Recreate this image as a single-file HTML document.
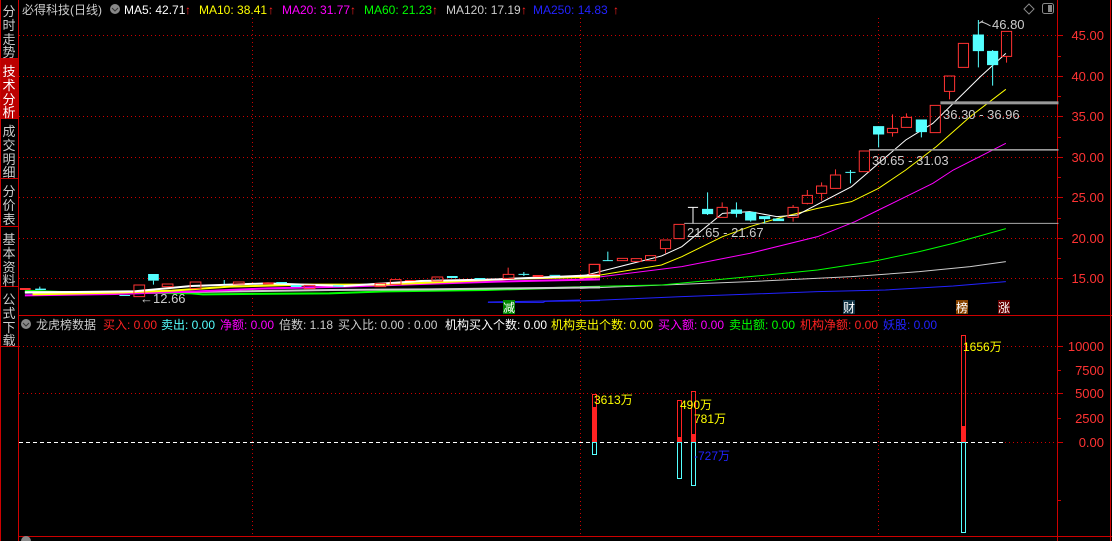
<!DOCTYPE html>
<html><head><meta charset="utf-8"><style>
html,body{margin:0;padding:0;background:#000;width:1112px;height:541px;overflow:hidden}
svg{display:block}
text{font-family:"Liberation Sans","Noto Sans CJK SC",sans-serif;font-size:12px}
</style></head><body>
<svg width="1112" height="541" viewBox="0 0 1112 541" xmlns="http://www.w3.org/2000/svg">
<rect width="1112" height="541" fill="#000"/>
<!-- sidebar -->
<g stroke="#c00" fill="none">
<line x1="18.5" y1="0" x2="18.5" y2="541"/>
<line x1="0.5" y1="0" x2="0.5" y2="541"/>
<line x1="0" y1="58.5" x2="18" y2="58.5"/>
<line x1="0" y1="118.5" x2="18" y2="118.5"/>
<line x1="0" y1="178.5" x2="18" y2="178.5"/>
<line x1="0" y1="226.5" x2="18" y2="226.5"/>
<line x1="0" y1="286.5" x2="18" y2="286.5"/>
<line x1="0" y1="346.5" x2="18" y2="346.5"/>
</g>
<rect x="1" y="59" width="17" height="59" fill="#b00"/>
<g fill="#ccc" font-size="13" text-anchor="middle">
<text x="9" y="16" style="font-size:13px">分</text><text x="9" y="30" style="font-size:13px">时</text><text x="9" y="44" style="font-size:13px">走</text><text x="9" y="57" style="font-size:13px">势</text>
<text x="9" y="76" fill="#fff" style="font-size:13px">技</text><text x="9" y="90" fill="#fff" style="font-size:13px">术</text><text x="9" y="104" fill="#fff" style="font-size:13px">分</text><text x="9" y="117" fill="#fff" style="font-size:13px">析</text>
<text x="9" y="136" style="font-size:13px">成</text><text x="9" y="150" style="font-size:13px">交</text><text x="9" y="164" style="font-size:13px">明</text><text x="9" y="177" style="font-size:13px">细</text>
<text x="9" y="196" style="font-size:13px">分</text><text x="9" y="210" style="font-size:13px">价</text><text x="9" y="224" style="font-size:13px">表</text>
<text x="9" y="244" style="font-size:13px">基</text><text x="9" y="258" style="font-size:13px">本</text><text x="9" y="272" style="font-size:13px">资</text><text x="9" y="285" style="font-size:13px">料</text>
<text x="9" y="304" style="font-size:13px">公</text><text x="9" y="318" style="font-size:13px">式</text><text x="9" y="332" style="font-size:13px">下</text><text x="9" y="345" style="font-size:13px">载</text>
</g>
<!-- frame -->
<g stroke="#c00" fill="none">
<line x1="1057.5" y1="0" x2="1057.5" y2="541"/>
<line x1="1110.5" y1="0" x2="1110.5" y2="541"/>
<line x1="19" y1="315.5" x2="1112" y2="315.5"/>
<line x1="19" y1="536.5" x2="1112" y2="536.5"/>
</g>
<!-- grid upper -->
<g stroke="#c00" stroke-dasharray="1,3">
<line x1="19" y1="35.5" x2="1057" y2="35.5"/><line x1="19" y1="76.5" x2="1057" y2="76.5"/><line x1="19" y1="116.5" x2="1057" y2="116.5"/><line x1="19" y1="157.5" x2="1057" y2="157.5"/><line x1="19" y1="197.5" x2="1057" y2="197.5"/><line x1="19" y1="238.5" x2="1057" y2="238.5"/><line x1="19" y1="278.5" x2="1057" y2="278.5"/>
<line x1="252.5" y1="18" x2="252.5" y2="315"/><line x1="580.5" y1="18" x2="580.5" y2="315"/><line x1="878.5" y1="18" x2="878.5" y2="315"/>
<line x1="19" y1="346.5" x2="1057" y2="346.5"/><line x1="19" y1="393.5" x2="1057" y2="393.5"/><line x1="1005" y1="442.5" x2="1057" y2="442.5"/>
<line x1="252.5" y1="333" x2="252.5" y2="536"/><line x1="580.5" y1="333" x2="580.5" y2="536"/><line x1="878.5" y1="333" x2="878.5" y2="536"/>
</g>
<line x1="19" y1="442.5" x2="1005" y2="442.5" stroke="#fff" stroke-dasharray="4,3"/>
<!-- axis labels -->
<g fill="#f33" text-anchor="end" style="font-size:13px">
<text x="1104" y="40" style="font-size:13px">45.00</text><text x="1104" y="81" style="font-size:13px">40.00</text><text x="1104" y="121" style="font-size:13px">35.00</text><text x="1104" y="162" style="font-size:13px">30.00</text><text x="1104" y="202" style="font-size:13px">25.00</text><text x="1104" y="243" style="font-size:13px">20.00</text><text x="1104" y="283" style="font-size:13px">15.00</text>
<text x="1104" y="351" style="font-size:13px">10000</text><text x="1104" y="375" style="font-size:13px">7500</text><text x="1104" y="398" style="font-size:13px">5000</text><text x="1104" y="423" style="font-size:13px">2500</text><text x="1104" y="447" style="font-size:13px">0.00</text>
</g>
<g stroke="#c00">
<line x1="1057" y1="35.5" x2="1063" y2="35.5"/><line x1="1057" y1="56.5" x2="1061" y2="56.5"/><line x1="1057" y1="76.5" x2="1063" y2="76.5"/><line x1="1057" y1="96.5" x2="1061" y2="96.5"/><line x1="1057" y1="116.5" x2="1063" y2="116.5"/><line x1="1057" y1="137.5" x2="1061" y2="137.5"/><line x1="1057" y1="157.5" x2="1063" y2="157.5"/><line x1="1057" y1="177.5" x2="1061" y2="177.5"/><line x1="1057" y1="197.5" x2="1063" y2="197.5"/><line x1="1057" y1="218.5" x2="1061" y2="218.5"/><line x1="1057" y1="238.5" x2="1063" y2="238.5"/><line x1="1057" y1="258.5" x2="1061" y2="258.5"/><line x1="1057" y1="278.5" x2="1063" y2="278.5"/>
<line x1="1057" y1="346.5" x2="1063" y2="346.5"/><line x1="1057" y1="370.5" x2="1061" y2="370.5"/><line x1="1057" y1="393.5" x2="1063" y2="393.5"/><line x1="1057" y1="418.5" x2="1061" y2="418.5"/><line x1="1057" y1="442.5" x2="1063" y2="442.5"/><line x1="1057" y1="500.5" x2="1061" y2="500.5"/>
</g>
<!-- header -->
<text x="22" y="14" fill="#ccc">必得科技(日线)</text>
<circle cx="115" cy="9" r="5" fill="#888"/><path d="M112 8l3 3 3-3" stroke="#333" fill="none"/>
<text x="124" y="14" fill="#fff">MA5: 42.71</text><text x="185" y="14" fill="#f22">↑</text>
<text x="199" y="14" fill="#ff0">MA10: 38.41</text><text x="268" y="14" fill="#f22">↑</text>
<text x="282" y="14" fill="#f0f">MA20: 31.77</text><text x="350" y="14" fill="#f22">↑</text>
<text x="364" y="14" fill="#0f0">MA60: 21.23</text><text x="432" y="14" fill="#f22">↑</text>
<text x="446" y="14" fill="#ccc">MA120: 17.19</text><text x="521" y="14" fill="#f22">↑</text>
<text x="533" y="14" fill="#22f">MA250: 14.83</text><text x="613" y="14" fill="#f22">↑</text>
<path d="M1029 4l5 5-5 5-5-5z" stroke="#888" fill="none"/>
<rect x="1042.5" y="3.5" width="11" height="10" rx="2" stroke="#888" fill="none"/><rect x="1048" y="5" width="4" height="7" fill="#888"/>
<!-- right part candles & MAs, zoom coords -->
<g transform="translate(580,10) scale(0.33933,0.33333)" fill="none" stroke-width="1" >
<g vector-effect="non-scaling-stroke">
<polyline vector-effect="non-scaling-stroke" stroke="#22f" points="0,873 300,860 700,845 900,840 1100,828 1255,815"/>
<polyline vector-effect="non-scaling-stroke" stroke="#ccc" points="0,835 500,815 800,800 1000,785 1150,770 1255,755"/>
<polyline vector-effect="non-scaling-stroke" stroke="#0f0" points="0,830 240,825 500,800 700,780 860,755 1000,725 1100,700 1255,656"/>
<polyline vector-effect="non-scaling-stroke" stroke="#f0f" points="0,808 300,770 500,730 700,680 810,635 880,600 960,560 1040,520 1100,480 1255,400"/>
<polyline vector-effect="non-scaling-stroke" stroke="#ff0" points="0,805 240,765 300,740 420,680 500,650 600,620 700,595 800,575 880,535 960,480 1050,410 1150,320 1255,238"/>
<polyline vector-effect="non-scaling-stroke" stroke="#fff" points="0,800 240,738 300,710 420,610 500,605 580,620 640,615 800,530 880,460 960,390 1040,340 1100,280 1180,200 1255,130"/>
</g>
<g vector-effect="non-scaling-stroke" stroke="#aaa">
<line vector-effect="non-scaling-stroke" x1="307" y1="640" x2="1410" y2="640"/>
</g>
<rect x="852" y="417" width="558" height="5" fill="#999"/>
<rect x="1062" y="274" width="348" height="9" fill="#999"/>
<!-- red candles -->
<g stroke="#f33">
<path vector-effect="non-scaling-stroke" d="M27 763h30v37h-30zM110 745h30v7h-30zM151 746h30v8h-30zM193 737h30v15h-30zM237 690h30v26h-30zM252 716v14M277 643h30v43h-30zM404 592h30v30h-30zM419 577v15M613 592h30v30h-30zM628 585v7M628 622v13M655 556h30v24h-30zM670 540v16M670 580v3M697 528h30v22h-30zM712 517v11M712 550v22M738 495h30v40h-30zM753 478v17M823 423h30v62h-30zM906 355h30v13h-30zM921 313v42M921 368v12M947 322h30v30h-30zM962 310v12M1032 286h30v82h-30zM1074 198h30v46h-30zM1089 244v24M1115 100h30v72h-30zM1242 64h30v75h-30zM1257 139v19"/>
</g>
<g stroke="#5ff" fill="#5ff">
<path vector-effect="non-scaling-stroke" d="M67 752h30M82 725v27M361 598h30v13h-30zM376 547v68M446 600h30v10h-30zM461 577v45M488 607h30v23h-30zM503 630v5M529 620h30v6h-30zM544 626v14M570 627h30v5h-30zM782 487h30M797 480v40M865 350h30v22h-30zM880 372v40M991 330h30v35h-30zM1006 365v17M1159 75h30v47h-30zM1174 30v142M1201 124h30v40h-30zM1216 120v107"/>
</g>
<path vector-effect="non-scaling-stroke" stroke="#fff" d="M318 592h30M333 592v48"/>
<path vector-effect="non-scaling-stroke" stroke="#ccc" d="M1176 40l12-8 M1180 36q10 0 30 12"/>
</g>
<text x="687" y="237" fill="#ccc" style="font-size:13px">21.65 - 21.67</text>
<text x="872" y="165" fill="#ccc" style="font-size:13px">30.65 - 31.03</text>
<text x="943" y="119" fill="#ccc" style="font-size:13px">36.30 - 36.96</text>
<text x="992" y="29" fill="#ccc" style="font-size:13px">46.80</text>
<!-- left part, zoom5 coords -->
<g transform="translate(0,180) scale(0.38265,0.33333)">
<g fill="none">
<polyline vector-effect="non-scaling-stroke" stroke="#22f" points="1275,367 1420,367 1425,364 1568,362"/>
<polyline vector-effect="non-scaling-stroke" stroke="#0f0" stroke-width="2" points="65,332 160,336 500,340 530,343 860,340 1010,334 1270,330 1500,322 1568,322"/>
<polyline vector-effect="non-scaling-stroke" stroke="#ccc" stroke-width="2" points="65,336 500,336 865,330 1125,328 1345,325 1568,322"/>
<polyline vector-effect="non-scaling-stroke" stroke="#f0f" stroke-width="2" points="65,346 300,342 500,335 700,325 900,320 1100,312 1300,305 1568,298"/>
<polyline vector-effect="non-scaling-stroke" stroke="#ff0" stroke-width="2" points="85,343 300,338 450,332 600,320 800,314 1000,314 1160,306 1350,296 1568,290"/>
<polyline vector-effect="non-scaling-stroke" stroke="#fff" stroke-width="2" points="65,338 350,334 500,318 700,310 900,318 1100,303 1300,298 1568,285"/>
<path vector-effect="non-scaling-stroke" stroke="#f33" fill="none" d="M350 315h28v35h-28zM424 312h28v8h-28zM497 306h28v20h-28zM610 306h28v6h-28zM795 316h28v10h-28zM980 310h28v10h-28zM1020 299h28v14h-28zM1129 291h28v12h-28zM1315 283h28v12h-28zM1328 263v20M1540 253h28v30h-28z"/>
<path fill="#f33" d="M52 324h28v6h-28zM1392 285h28v6h-28zM687 307h28v6h-28zM1058 300h28v3h-28z"/>
<path fill="#5ff" d="M387 282h28v20h-28zM1168 288h28v6h-28zM1240 294h28v4h-28zM760 315h28v6h-28zM870 316h28v4h-28zM92 326h28v4h-28zM312 345h28v3h-28zM722 306h28v4h-28z"/>
<path vector-effect="non-scaling-stroke" stroke="#5ff" d="M401 302v12M586 300v12M1355 283h28M1369 276v12M1436 286h28M104 320v8"/>
</g>
</g>
<text x="140" y="303" fill="#ccc" style="font-size:13px">←12.66</text>
<polyline stroke="#22f" fill="none" points="488,302 545,301 580,300"/>
<!-- markers -->
<rect x="503" y="300" width="12" height="14" fill="#080"/><text x="503" y="312" fill="#fff">减</text>
<rect x="843" y="300" width="12" height="14" fill="#134"/><text x="843" y="312" fill="#fff">财</text>
<rect x="956" y="300" width="12" height="14" fill="#840"/><text x="956" y="312" fill="#fff">榜</text>
<rect x="998" y="300" width="12" height="14" fill="#600"/><text x="998" y="312" fill="#fff">涨</text>
<!-- lower header -->
<circle cx="26" cy="324" r="5" fill="#888"/><path d="M23 323l3 3 3-3" stroke="#333" fill="none"/>
<text x="36" y="329" fill="#ccc">龙虎榜数据</text>
<text x="103" y="329" fill="#f22">买入: 0.00</text>
<text x="161" y="329" fill="#5ff">卖出: 0.00</text>
<text x="220" y="329" fill="#f0f">净额: 0.00</text>
<text x="279" y="329" fill="#ccc">倍数: 1.18</text>
<text x="338" y="329" fill="#ccc">买入比: 0.00 : 0.00</text>
<text x="445" y="329" fill="#fff">机构买入个数: 0.00</text>
<text x="551" y="329" fill="#ff0">机构卖出个数: 0.00</text>
<text x="658" y="329" fill="#f0f">买入额: 0.00</text>
<text x="729" y="329" fill="#0f0">卖出额: 0.00</text>
<text x="800" y="329" fill="#f22">机构净额: 0.00</text>
<text x="883" y="329" fill="#22f">妖股: 0.00</text>
<!-- lower bars -->
<g fill="none">
<rect x="592.5" y="394.5" width="4" height="47" stroke="#f22"/><rect x="592" y="407" width="5" height="35" fill="#f22"/><rect x="592.5" y="442.5" width="4" height="12" stroke="#5ff"/>
<rect x="677.5" y="400.5" width="4" height="41" stroke="#f22"/><rect x="677" y="437" width="5" height="5" fill="#f22"/><rect x="677.5" y="442.5" width="4" height="36" stroke="#5ff"/>
<rect x="691.5" y="391.5" width="4" height="50" stroke="#f22"/><rect x="691" y="434" width="5" height="8" fill="#f22"/><rect x="691.5" y="442.5" width="4" height="43" stroke="#5ff"/>
<rect x="961.5" y="335.5" width="4" height="106" stroke="#f22"/><rect x="961" y="426" width="5" height="16" fill="#f22"/><rect x="961.5" y="442.5" width="4" height="90" stroke="#5ff"/>
</g>
<text x="594" y="404" fill="#ff0">3613万</text>
<text x="680" y="409" fill="#ff0">490万</text>
<text x="694" y="423" fill="#ff0">781万</text>
<text x="694" y="460" fill="#22f">-727万</text>
<text x="963" y="351" fill="#ff0">1656万</text>
<circle cx="26" cy="541" r="5" fill="#888"/>
</svg>
</body></html>
